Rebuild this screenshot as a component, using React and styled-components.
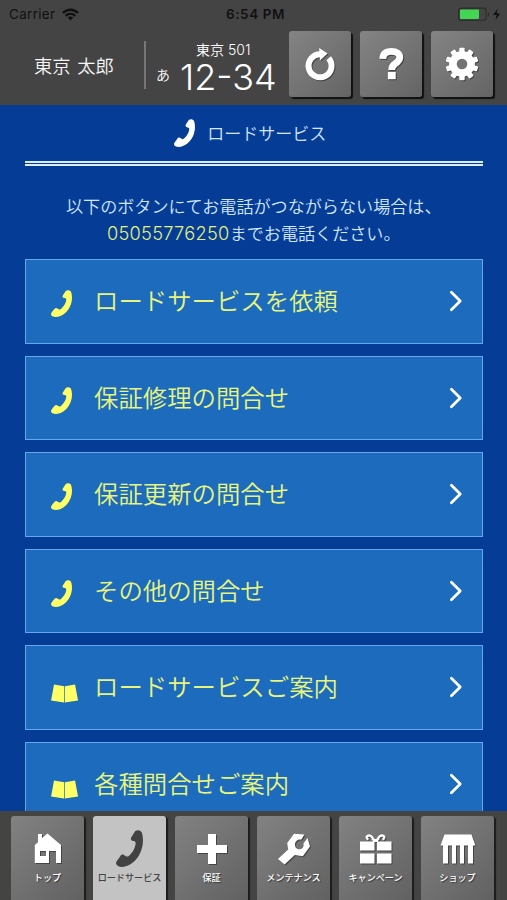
import React from 'react';
import styled, { createGlobalStyle } from 'styled-components';

const MENUS = [
  { id: 1, icon: 'phone', label: 'ロードサービスを依頼' },
  { id: 2, icon: 'phone', label: '保証修理の問合せ' },
  { id: 3, icon: 'phone', label: '保証更新の問合せ' },
  { id: 4, icon: 'phone', label: 'その他の問合せ' },
  { id: 5, icon: 'book', label: 'ロードサービスご案内' },
  { id: 6, icon: 'book', label: '各種問合せご案内' },
];

const PhoneIcon = ({ width, height }) => (
  <svg width={width} height={height} viewBox="0 0 80 110" preserveAspectRatio="none" fill="currentColor">
    <path d="M57 3C64-1 72 0 76 7C83 26 81 54 68 76C57 94 39 109 19 110C8 110 1 106 0 99C0 93 5 89 9 83L13 77C16 72 22 72 26 76C30 80 34 80 38 77C48 68 56 55 58 42C59 36 57 34 52 33C45 32 42 27 45 22Z" />
  </svg>
);

const BookIcon = () => (
  <svg width="27" height="19" viewBox="0 0 27 19" fill="currentColor">
    <path d="M3 0.5L13.2 2.2V18.4L0 16.4Z" />
    <path d="M24 0.5L13.9 2.2V18.4L27 16.4Z" />
  </svg>
);

const ChevronIcon = () => (
  <svg width="14" height="22" viewBox="0 0 14 22" fill="none" stroke="currentColor" strokeWidth="2.8" strokeLinecap="round" strokeLinejoin="round">
    <path d="M2.4 2.3L11.2 11L2.4 19.7" />
  </svg>
);

const WifiIcon = () => (
  <svg width="17" height="13" viewBox="0 0 17 13" fill="none" stroke="currentColor" strokeWidth="2.4">
    <path d="M1 5C5.3 0.7 11.7 0.7 16 5" />
    <path d="M3.7 7.9C6.5 5.2 10.5 5.2 13.3 7.9" />
    <path d="M8.5 12.4L5.7 9.5C7.3 8.1 9.7 8.1 11.3 9.5Z" fill="currentColor" stroke="none" />
  </svg>
);

const BatteryIcon = () => (
  <svg width="44" height="15" viewBox="0 0 44 15">
    <rect x="0.6" y="1.1" width="27.6" height="12.2" rx="2.8" fill="none" stroke="#2b2b2b" strokeWidth="1.1" />
    <rect x="2" y="2.5" width="19" height="9.4" rx="0.8" fill="#43d653" />
    <path d="M30 5C31.5 5.7 31.5 8.8 30 9.5Z" fill="#2b2b2b" />
    <path d="M39.8 1.8L35 8.1H38.7L37.5 12.9L42.3 6.4H38.7Z" fill="#111" />
  </svg>
);

const ReloadIcon = () => (
  <svg width="30" height="33" viewBox="0 0 30 33">
    <path d="M23.7 10.2A11.5 11.5 0 1 1 15.6 6.3" fill="none" stroke="#fff" strokeWidth="6" />
    <path d="M14.2 0L22.6 5.6L15 12.6Z" fill="#fff" />
  </svg>
);

const QuestionIcon = () => (
  <svg width="25" height="32" viewBox="0 0 25 32">
    <path d="M3.8 10.8C4 5.8 7 3.4 12.4 3.4C17.6 3.4 20.8 5.8 20.8 9.3C20.8 12.6 18.5 14.2 16 15.8C13.5 17.4 12.7 18.6 12.7 22" fill="none" stroke="#fff" strokeWidth="6.8" />
    <rect x="8.9" y="24" width="7.8" height="7.2" fill="#fff" />
  </svg>
);

const GearIcon = () => (
  <svg width="34" height="34" viewBox="-17 -17 34 34">
    {[0, 36, 72, 108, 144].map((deg) => (
      <rect key={deg} x="-2.7" y="-16.3" width="5.4" height="32.6" rx="1" fill="#fff" transform={`rotate(${deg})`} />
    ))}
    <circle r="12.9" fill="#fff" />
    <circle r="5.3" fill="#727272" />
  </svg>
);

const HomeIcon = () => (
  <svg width="28" height="31" viewBox="0 0 28 31" fill="#fff">
    <path fillRule="evenodd" d="M4 1H8V5L13.5 0.6L27 12V30H22V18H15V30H0.8V12L4 9.2ZM6 18V23H12V18Z" />
  </svg>
);

const PlusIcon = () => (
  <svg width="30" height="30" viewBox="0 0 30 30" fill="#fff">
    <path d="M11 0H19V11H30V19H19V30H11V19H0V11H11Z" />
  </svg>
);

const WrenchIcon = () => (
  <svg width="32" height="32" viewBox="0 0 32 32" fill="#fff">
    <path d="M16 0.8L26.4 1.4L23.4 6.6C20.2 6 17.2 8 17 11.2C16.8 14.3 19 16.4 21.6 16.3C24.6 16.2 26.2 13.6 25.4 10.6L29.6 5L32 13.4L24.8 23.2L16.8 22L6.5 31.4L0 26.1L10.2 16.6L9.2 10.1Z" />
  </svg>
);

const GiftIcon = () => (
  <svg width="32" height="30" viewBox="0 0 32 30">
    <path d="M0 7.5H14.5V16.5H0ZM17 7.5H31.5V16.5H17ZM0 19.5H14.5V29.5H0ZM17 19.5H31.5V29.5H17Z" fill="#fff" />
    <path d="M14 8C13.8 4 10.8 1 8.2 1.6C5.9 2.2 6.4 4.8 8.5 5.4M17 8C17.2 4 20.2 1 22.8 1.6C25.1 2.2 24.6 4.8 22.5 5.4M12 4.6L15.5 6.6L19 4.6" fill="none" stroke="#fff" strokeWidth="2.3" />
  </svg>
);

const ShopIcon = () => (
  <svg width="36" height="30" viewBox="0 0 36 30" fill="#fff">
    <path d="M4.5 0.6H31.5L35.5 11.5H0.5Z" />
    <path d="M3 11H8V29.5H3ZM12 11H16V29.5H12ZM20 11H24V29.5H20ZM28 11H33V29.5H28Z" />
  </svg>
);

const TABS = [
  { label: 'トップ', icon: <HomeIcon /> },
  { label: 'ロードサービス', icon: <PhoneIcon width={27} height={37} />, active: true },
  { label: '保証', icon: <PlusIcon /> },
  { label: 'メンテナンス', icon: <WrenchIcon /> },
  { label: 'キャンペーン', icon: <GiftIcon /> },
  { label: 'ショップ', icon: <ShopIcon /> },
];

const App = () => {
  return (
    <Screen>
      <GlobalStyle />
      <Header>
        <StatusBar>
          <Carrier>
            Carrier <WifiIcon />
          </Carrier>
          <Clock>6:54 PM</Clock>
          <Battery>
            <BatteryIcon />
          </Battery>
        </StatusBar>
        <HeaderBody>
          <UserName>東京 太郎</UserName>
          <Divider />
          <Plate>
            <PlateKana>あ</PlateKana>
            <PlateMain>
              <PlateArea>東京 501</PlateArea>
              <PlateNumber>12-34</PlateNumber>
            </PlateMain>
          </Plate>
          <HeaderButtons>
            <HeaderButton>
              <ReloadIcon />
            </HeaderButton>
            <HeaderButton>
              <QuestionIcon />
            </HeaderButton>
            <HeaderButton>
              <GearIcon />
            </HeaderButton>
          </HeaderButtons>
        </HeaderBody>
      </Header>
      <Content>
        <Title>
          <PhoneIcon width={21} height={28} />
          <span>ロードサービス</span>
        </Title>
        <Guide>
          以下のボタンにてお電話がつながらない場合は、
          <br />
          <Tel>05055776250</Tel>までお電話ください。
        </Guide>
        <MenuList>
          {MENUS.map((menu) => (
            <MenuButton key={menu.id}>
              <MenuIcon $type={menu.icon}>
                {menu.icon === 'phone' ? <PhoneIcon width={21} height={27} /> : <BookIcon />}
              </MenuIcon>
              <MenuLabel>{menu.label}</MenuLabel>
              <ChevronIcon />
            </MenuButton>
          ))}
        </MenuList>
      </Content>
      <TabBar>
        {TABS.map((tab) => (
          <Tab key={tab.label} $active={tab.active}>
            <TabIcon $active={tab.active}>{tab.icon}</TabIcon>
            <TabLabel>{tab.label}</TabLabel>
          </Tab>
        ))}
      </TabBar>
    </Screen>
  );
};

const GlobalStyle = createGlobalStyle`
  * {
    box-sizing: border-box;
  }
  body {
    margin: 0;
    overflow: hidden;
    font-family: 'Noto Sans CJK JP', sans-serif;
  }
  button {
    font-family: inherit;
    padding: 0;
    border: none;
  }
  svg {
    display: block;
    flex-shrink: 0;
    overflow: visible;
  }
`;

const Screen = styled.div`
  display: flex;
  flex-direction: column;
  width: 507px;
  height: 900px;
  overflow: hidden;
  background: #053d96;
`;

const Header = styled.header`
  flex-shrink: 0;
  height: 105px;
  background: #444;
`;

const StatusBar = styled.div`
  display: grid;
  grid-template-columns: 1fr auto 1fr;
  align-items: center;
  height: 28px;
  padding: 0 5px 0 9px;
  color: #111;
  font-family: Inter, sans-serif;
  font-size: 13.5px;
`;

const Carrier = styled.div`
  display: flex;
  align-items: center;
  gap: 7px;
  letter-spacing: 0.3px;
`;

const Clock = styled.div`
  font-weight: 600;
  font-size: 13.5px;
  letter-spacing: 0.6px;
`;

const Battery = styled.div`
  display: flex;
  justify-content: flex-end;
`;

const HeaderBody = styled.div`
  display: flex;
  height: 77px;
`;

const UserName = styled.div`
  width: 144px;
  padding: 24px 0 0 34px;
  color: #f4f4f4;
  font-size: 18.3px;
  font-weight: 350;
  line-height: 26px;
  word-spacing: 2.5px;
  white-space: nowrap;
`;

const Divider = styled.div`
  width: 2px;
  height: 48px;
  margin-top: 13px;
  background: #777;
`;

const Plate = styled.div`
  display: flex;
  width: 143px;
  padding-left: 10px;
  color: #fff;
`;

const PlateKana = styled.div`
  width: 24px;
  padding-top: 36px;
  font-size: 14px;
  font-weight: 350;
  line-height: 20px;
`;

const PlateMain = styled.div`
  display: flex;
  flex-direction: column;
  width: 96px;
`;

const PlateArea = styled.div`
  margin-top: 12px;
  padding-left: 16px;
  font-family: Inter, 'Noto Sans CJK JP', sans-serif;
  font-size: 14px;
  font-weight: 350;
  line-height: 20px;
  white-space: nowrap;
`;

const PlateNumber = styled.div`
  font-family: Inter, 'Noto Sans CJK JP', sans-serif;
  font-weight: 300;
  font-size: 36px;
  line-height: 34px;
  white-space: nowrap;
`;

const HeaderButtons = styled.div`
  display: flex;
  gap: 9px;
  padding-top: 3px;
`;

const HeaderButton = styled.button`
  display: flex;
  justify-content: center;
  align-items: center;
  width: 62px;
  height: 66px;
  border-radius: 3px;
  background: linear-gradient(135deg, #848484, #646464);
  box-shadow: 2px 2px 1px #111;
  svg {
    filter: drop-shadow(1px 1px 0.5px #444);
  }
`;

const Content = styled.main`
  flex: 1;
  min-height: 0;
  padding: 0 24.5px 0 25px;
  overflow: hidden;
`;

const Title = styled.h1`
  display: flex;
  justify-content: center;
  align-items: center;
  gap: 12px;
  height: 61px;
  margin: 0;
  padding: 0 7px 1px 0;
  border-bottom: 5px double #dcecff;
  color: #fff;
  font-size: 17px;
  font-weight: 350;
  span {
    color: #d3e6ff;
  }
`;

const Guide = styled.p`
  margin: 26px -20px 0;
  color: #d3e6ff;
  font-size: 17.1px;
  font-weight: 350;
  line-height: 27px;
  text-align: center;
  white-space: nowrap;
`;

const Tel = styled.span`
  color: #e4f07c;
  font-family: Inter, sans-serif;
  font-size: 18.2px;
  letter-spacing: 0.3px;
`;

const MenuList = styled.div`
  display: flex;
  flex-direction: column;
  gap: 12px;
  margin-top: 12px;
`;

const MenuButton = styled.button`
  display: flex;
  align-items: center;
  height: 84.5px;
  flex-shrink: 0;
  padding: 0 19px 0 25px;
  border: 1.5px solid #66a6ea;
  background: #1c6bbd;
  color: #fff;
`;

const MenuIcon = styled.span`
  width: 43px;
  margin-top: ${({ $type }) => ($type === 'phone' ? '5px' : '12px')};
  color: #ffff66;
`;

const MenuLabel = styled.span`
  flex: 1;
  margin-top: -2px;
  color: #e8f57c;
  font-size: 24.4px;
  font-weight: 350;
  line-height: 36px;
  text-align: left;
  white-space: nowrap;
`;

const TabBar = styled.nav`
  display: grid;
  grid-template-columns: repeat(6, 73px);
  column-gap: 9px;
  flex-shrink: 0;
  height: 89px;
  padding: 5px 0 0 11px;
  background: #444442;
`;

const Tab = styled.button`
  display: flex;
  flex-direction: column;
  align-items: center;
  height: 90px;
  border-radius: 3px;
  background: ${({ $active }) =>
    $active ? '#c3c3c3' : 'linear-gradient(135deg, #828282, #606060)'};
  box-shadow: 2px 1px 1px #1c1c1c;
  color: ${({ $active }) => ($active ? '#424242' : '#fff')};
  text-shadow: ${({ $active }) => ($active ? 'none' : '1px 1px 1px #333')};
`;

const TabIcon = styled.span`
  display: flex;
  justify-content: center;
  align-items: center;
  height: 37px;
  margin-top: 14px;
  filter: ${({ $active }) => ($active ? 'none' : 'drop-shadow(1px 1px 0.5px #444)')};
`;

const TabLabel = styled.span`
  font-size: 9.1px;
  font-weight: 500;
  line-height: 16px;
  margin-top: 2px;
  white-space: nowrap;
`;

export default App;
